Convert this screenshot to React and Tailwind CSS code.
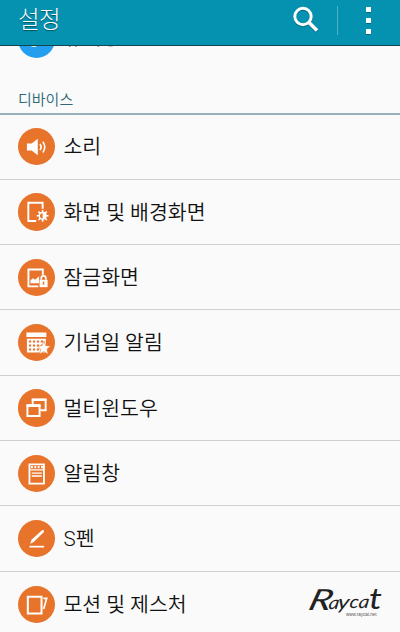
import clsx from "clsx";

const SoundIcon = () => (
  <>
    <path d="M8.800 15.200h4.700l6-4.700v16.500l-6-4.700h-4.700z" fill="#fff" stroke="none" />
    <path d="M21.800 15.800q2 3 0 6M24.500 13.500q3.800 5.300 0 10.600" strokeWidth="1.600" />
  </>
);

const DisplayIcon = () => (
  <>
    <path d="M24.300 15.500V9.700H10.200v18H18" strokeWidth="1.900" />
    <g transform="translate(24.300 22.500)">
      <path d="M0-5.800V5.800M-5.800 0H5.800M-4.100-4.100l8.200 8.200M4.100-4.100l-8.200 8.200" strokeWidth="1.600" />
      <circle r="4" fill="#fff" stroke="none" />
      <path d="M0-2.600a2.600 2.600 0 0 0 0 5.200z" fill="#e8732b" stroke="none" />
    </g>
  </>
);

const LockScreenIcon = () => (
  <>
    <path d="M24.500 15.500V10.300H10.300v16.700H20" strokeWidth="1.900" />
    <path d="M12.300 24v-3l2.500-2 2 1.500 4-3.500v7z" fill="#fff" stroke="none" />
    <rect x="21.300" y="20.500" width="7.900" height="7.300" fill="#fff" stroke="none" />
    <path d="M22.900 20.500v-1.500a2.300 2.300 0 0 1 4.600 0v1.500" strokeWidth="1.600" />
    <path d="M25.200 22.300v3" stroke="#e8732b" strokeWidth="1.500" />
  </>
);

const CalendarIcon = () => (
  <>
    <path d="M8.300 8.500h19.700v4.300H8.300zM8.800 14.500h18.700v13.500H8.800z" fill="#fff" stroke="none" />
    <path
      d="M10.800 17.300h16M10.800 21.200h16M10.800 25.200h11"
      stroke="#e8732b"
      strokeWidth="2"
      strokeDasharray="2.200 1.700"
    />
    <path
      d="M25.500 17l2 4.400 4.700.4-3.600 3.200 1.200 4.800-4.300-2.600-4.300 2.600 1.200-4.800-3.600-3.200 4.700-.4z"
      fill="#fff"
      stroke="#e8732b"
      strokeWidth="0.600"
    />
  </>
);

const MultiWindowIcon = () => (
  <>
    <path d="M14.500 15V10.500h12.800V21H22" />
    <path d="M9.300 16.200h12v10.500h-12z" />
    <path d="M13.600 10.500h14.600M8.400 16.400h13.800" strokeWidth="2.500" />
  </>
);

const NoticePanelIcon = () => (
  <>
    <path d="M11.300 9.300h14.300v19H11.300z" strokeWidth="1.800" />
    <path d="M12.800 12h12" strokeWidth="2.200" strokeDasharray="1.900 1.400" />
    <path d="M12 14.700h13.500M13.500 17.900h10M13.500 20.700h10" strokeWidth="1.300" />
  </>
);

const PenIcon = () => (
  <>
    <path d="M12 23.500l1.500-4.300L23.800 10.200q1.200-.6 1.700.2.500 1-.4 2L15.500 21.800z" fill="#fff" stroke="none" />
    <path d="M11.300 26.300h14.500" strokeWidth="1.700" />
  </>
);

const MotionIcon = () => (
  <>
    <path d="M9.700 10.500h13.500v16.700H9.700z" strokeWidth="2" />
    <path d="M25 12.200h3.300l-3 10.500" strokeWidth="1.700" />
  </>
);

const items = [
  { label: "소리", Icon: SoundIcon },
  { label: "화면 및 배경화면", Icon: DisplayIcon },
  { label: "잠금화면", Icon: LockScreenIcon },
  { label: "기념일 알림", Icon: CalendarIcon },
  { label: "멀티윈도우", Icon: MultiWindowIcon },
  { label: "알림창", Icon: NoticePanelIcon },
  { label: "S펜", Icon: PenIcon },
  { label: "모션 및 제스처", Icon: MotionIcon },
];

function Header() {
  return (
    <header className="relative z-10 flex h-[46px] shrink-0 items-center border-b border-[#17454f] bg-[#0492b0] pb-[5px] pl-[18px] text-white">
      <h1 className="flex-1 pt-px text-[23.500px] leading-none font-light tracking-[-0.5px] [text-shadow:0_1px_1px_#00505f]">
        설정
      </h1>
      <button className="mr-[17px]" aria-label="검색">
        <svg className="block drop-shadow-[0_1px_0_#056b80]" width="28" height="28" viewBox="0 0 28 28" fill="none" stroke="#fff">
          <circle cx="11" cy="10.500" r="8.200" strokeWidth="3" />
          <path d="M16.500 16l8.500 8.500" strokeWidth="3.500" />
        </svg>
      </button>
      <div className="h-[29px] w-px bg-[#4fb3c8]" />
      <button className="mr-[29px] ml-[28px] flex flex-col gap-[6px]" aria-label="메뉴">
        <span className="size-[5px] bg-white shadow-[0_1px_0_#056b80]" />
        <span className="size-[5px] bg-white shadow-[0_1px_0_#056b80]" />
        <span className="size-[5px] bg-white shadow-[0_1px_0_#056b80]" />
      </button>
    </header>
  );
}

function SettingRow({ label, Icon, last }) {
  return (
    <li
      className={clsx(
        "flex h-[65.330px] items-center gap-[8.500px] pl-[17.500px]",
        !last && "border-b border-[#cfd0d4]"
      )}
    >
      <span className="flex size-[37.500px] shrink-0 rounded-full bg-[#e8732b]">
        <svg className="size-full" viewBox="0 0 37 37" fill="none" stroke="#fff" strokeWidth="1.900">
          <Icon />
        </svg>
      </span>
      <span className="pt-[2px] text-[20.500px] leading-none font-[350] whitespace-nowrap">{label}</span>
    </li>
  );
}

function Watermark() {
  return (
    <svg className="absolute top-[582px] left-[302px]" width="90" height="38" fill="#222">
      <g className="font-['Lato'] italic">
        <text transform="translate(5 28) skewX(-16) scale(1.350 1)" fontSize="29">R</text>
        <text transform="translate(26 27) skewX(-8) scale(1.150 1)" fontSize="18">a</text>
        <text transform="translate(35 27) skewX(-8) scale(1.200 1)" fontSize="20">y</text>
        <text transform="translate(47 26) skewX(-8) scale(1.100 1)" fontSize="18">c</text>
        <text transform="translate(56 26) skewX(-8) scale(1.150 1)" fontSize="18">a</text>
        <text transform="translate(67 27) scale(1.300 1)" fontSize="28">t</text>
      </g>
      <text x="44" y="33.500" fontSize="4.500" className="font-['Liberation_Sans']" fill="#555">www.raycat.net</text>
    </svg>
  );
}

export default function App() {
  return (
    <div className="relative flex h-[632px] w-[400px] flex-col overflow-hidden bg-[#fafafa] font-['Roboto','Noto_Sans_CJK_KR',sans-serif] text-[#111]">
      <Header />

      {/* Row scrolled under the header */}
      <div className="-mt-[26px] flex h-[38px] shrink-0 items-center gap-[8.500px] pl-[17.500px]">
        <span className="flex size-[37.500px] items-center justify-center rounded-full bg-[#249ff0]">
          <svg width="20" height="20" viewBox="0 0 20 20" fill="none" stroke="#fff" strokeWidth="2">
            <circle cx="8" cy="12" r="5" />
          </svg>
        </span>
        <span className="pb-px text-[20.500px] leading-none font-[350]">휴대용</span>
      </div>

      <h2 className="flex h-[56.500px] shrink-0 items-end border-b-2 border-[#9ab0ba] pb-[5px] pl-[18px] text-[15px] leading-none font-[350] text-[#2c6878]">
        디바이스
      </h2>
      <ul className="shrink-0">
        {items.map((item, i) => (
          <SettingRow key={item.label} {...item} last={i === items.length - 1} />
        ))}
      </ul>
      <Watermark />
    </div>
  );
}
